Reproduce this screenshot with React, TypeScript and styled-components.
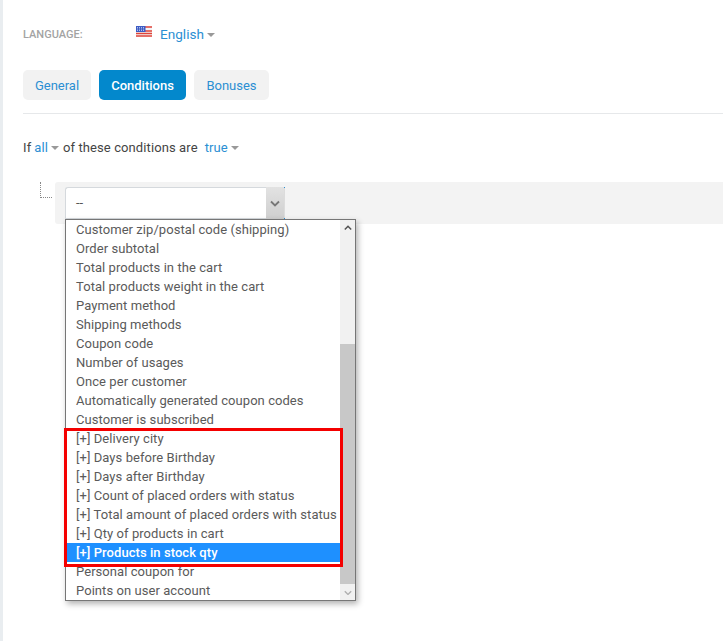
import React from 'react'
import styled, { createGlobalStyle } from 'styled-components'

const GlobalStyle = createGlobalStyle`
  html, body {
    margin: 0;
    padding: 0;
    background: #fff;
  }
  body {
    font-family: Roboto, "Liberation Sans", sans-serif;
    font-size: 13px;
    color: #555;
  }
`

const Page = styled.div`
  width: 723px;
  height: 641px;
  box-sizing: border-box;
  border-left: 3px solid #e9edf0;
  padding: 25px 0 0 20px;
  overflow: hidden;
`

const LanguageRow = styled.div`
  display: flex;
  align-items: center;
  height: 18px;
`

const LanguageLabel = styled.span`
  width: 113px;
  font-size: 11px;
  font-weight: 500;
  color: #a3a3a3;
  text-transform: uppercase;
`

const Flag = styled.svg`
  width: 16px;
  height: 11px;
  margin-right: 8px;
  margin-top: -5px;
`

const Link = styled.span`
  color: #2b8fd3;
  font-size: 13px;
`

const LanguageLink = styled(Link)`
  font-size: 13.6px;
`

const Caret = styled.i`
  display: inline-block;
  width: 0;
  height: 0;
  margin-left: 3px;
  vertical-align: 2px;
  border-left: 4px solid transparent;
  border-right: 4px solid transparent;
  border-top: 4px solid #999;
`

const Tabs = styled.div`
  display: flex;
  gap: 8px;
  margin-top: 27px;
  padding-bottom: 13px;
  border-bottom: 1px solid #e6e8ea;
`

const Tab = styled.div<{ $active?: boolean; $width: number }>`
  box-sizing: border-box;
  width: ${(p) => p.$width}px;
  height: 30px;
  padding-top: 1px;
  line-height: 30px;
  text-align: center;
  border-radius: 5px;
  background: ${(p) => (p.$active ? '#0388cc' : '#f2f2f2')};
  color: ${(p) => (p.$active ? '#fff' : '#2b8fd3')};
  font-weight: ${(p) => (p.$active ? 500 : 400)};
`

const Sentence = styled.div`
  display: flex;
  align-items: baseline;
  margin-top: 25px;
  height: 18px;
  line-height: 18px;
  color: #444;
  letter-spacing: 0.1px;
`

const SentenceLink = styled(Link)`
  margin: 0 4px 0 3px;
`

const TrueLink = styled(Link)`
  margin-left: 7px;
`

const ConditionTree = styled.div`
  display: flex;
  margin-top: 25px;
`

const TreeLine = styled.div`
  box-sizing: border-box;
  width: 12px;
  height: 16px;
  margin-left: 17px;
  border-left: 1px dotted #888;
  border-bottom: 1px dotted #888;
`

const ConditionRow = styled.div`
  position: relative;
  flex: 1;
  height: 42px;
  margin-left: 3px;
  padding: 5px 0 0 10px;
  box-sizing: border-box;
  background: #f3f3f3;
  border-radius: 3px 0 0 3px;
`

const SelectBox = styled.div`
  display: flex;
  justify-content: space-between;
  box-sizing: border-box;
  width: 220px;
  height: 32px;
  background: #fff;
  border: 1px solid #d5d9dd;
  border-right: none;
  border-radius: 3px 0 0 0;
`

const SelectValue = styled.span`
  padding: 6px 0 0 10px;
  color: #555;
  line-height: 18px;
`

const SelectArrow = styled.div`
  display: flex;
  align-items: center;
  justify-content: center;
  width: 18px;
  margin: -1px 0;
  background: linear-gradient(#e2e2e2, #cfcfcf);
  border-right: 1px solid;
  border-image: linear-gradient(#2b8fd3 0 2px, #dcdcdc 2px calc(100% - 2px), #2b8fd3 calc(100% - 2px)) 1;
`

const Dropdown = styled.div`
  position: absolute;
  left: 10px;
  top: 37px;
  display: flex;
  box-sizing: border-box;
  width: 291px;
  height: 382px;
  background: #fff;
  border: 1px solid #767676;
  box-shadow: 2px 3px 6px rgba(0, 0, 0, 0.3);
  z-index: 2;
`

const OptionList = styled.ul`
  flex: 1;
  min-width: 0;
  margin: 0;
  padding: 0;
  list-style: none;
`

const Option = styled.li<{ $selected?: boolean }>`
  height: 19px;
  line-height: 19px;
  padding-left: 10px;
  white-space: nowrap;
  letter-spacing: 0.06px;
  color: ${(p) => (p.$selected ? '#fff' : '#5a5a5a')};
  background: ${(p) => (p.$selected ? '#1e90ff' : 'transparent')};
  font-weight: ${(p) => (p.$selected ? 500 : 400)};
`

const Scrollbar = styled.div`
  display: flex;
  flex-direction: column;
  width: 15px;
  background: #f1f1f1;
`

const ScrollButton = styled.div`
  display: flex;
  align-items: center;
  justify-content: center;
  height: 15px;
`

const ScrollThumb = styled.div`
  height: 240px;
  margin-top: 109px;
  background: #c8c8c8;
`

const ScrollSpacer = styled.div`
  flex: 1;
`

const Highlight = styled.div`
  position: absolute;
  left: -2px;
  top: 208px;
  box-sizing: border-box;
  width: 279px;
  height: 139px;
  border: 3px solid #f40000;
  pointer-events: none;
`

const Chevron = ({ up, color, size = 10 }: { up?: boolean; color: string; size?: number }) => (
  <svg width={size} height={size * 0.7} viewBox="0 0 10 7" fill="none">
    <path d={up ? 'M1 5.5L5 1.5L9 5.5' : 'M1 1.5L5 5.5L9 1.5'} stroke={color} strokeWidth="1.8" />
  </svg>
)

const options = [
  'Customer zip/postal code (shipping)',
  'Order subtotal',
  'Total products in the cart',
  'Total products weight in the cart',
  'Payment method',
  'Shipping methods',
  'Coupon code',
  'Number of usages',
  'Once per customer',
  'Automatically generated coupon codes',
  'Customer is subscribed',
  '[+] Delivery city',
  '[+] Days before Birthday',
  '[+] Days after Birthday',
  '[+] Count of placed orders with status',
  '[+] Total amount of placed orders with status',
  '[+] Qty of products in cart',
  '[+] Products in stock qty',
  'Personal coupon for',
  'Points on user account',
]

const App = () => {
  return (
    <Page>
      <GlobalStyle />
      <LanguageRow>
        <LanguageLabel>Language:</LanguageLabel>
        <Flag viewBox="0 0 16 11">
          <rect width="16" height="11" fill="#f4f4f4" />
          <path d="M0 1h16M0 5h16M0 7.5h16M0 10h16" stroke="#e0433a" strokeWidth="1.3" />
          <rect width="9.5" height="6" fill="#3d5cc4" />
          <path d="M1 1.5h8M1 3h8M1 4.5h8" stroke="#dfe6fa" strokeWidth="0.7" strokeDasharray="1 1" />
        </Flag>
        <LanguageLink>English<Caret /></LanguageLink>
      </LanguageRow>

      <Tabs>
        <Tab $width={68}>General</Tab>
        <Tab $width={87} $active>Conditions</Tab>
        <Tab $width={75}>Bonuses</Tab>
      </Tabs>

      <Sentence>
        If
        <SentenceLink>all<Caret /></SentenceLink>
        of these conditions are
        <TrueLink>true<Caret /></TrueLink>
      </Sentence>

      <ConditionTree>
        <TreeLine />
        <ConditionRow>
          <SelectBox>
            <SelectValue>--</SelectValue>
            <SelectArrow>
              <Chevron color="#777" />
            </SelectArrow>
          </SelectBox>
          <Dropdown>
            <OptionList>
              {options.map((o) => (
                <Option key={o} $selected={o === '[+] Products in stock qty'}>{o}</Option>
              ))}
            </OptionList>
            <Scrollbar>
              <ScrollButton><Chevron up color="#505050" size={8} /></ScrollButton>
              <ScrollThumb />
              <ScrollSpacer />
              <ScrollButton><Chevron color="#b0b0b0" size={8} /></ScrollButton>
            </Scrollbar>
            <Highlight />
          </Dropdown>
        </ConditionRow>
      </ConditionTree>
    </Page>
  )
}

export default App
